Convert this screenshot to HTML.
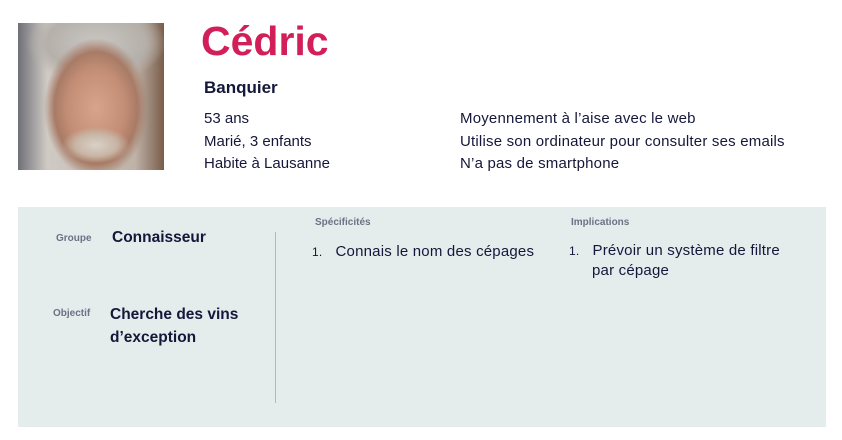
<!DOCTYPE html>
<html><head><meta charset="utf-8"><style>
body{margin:0;width:842px;height:440px;background:#fff;font-family:"Liberation Sans",sans-serif;color:#15173a;position:relative;overflow:hidden}
.a{position:absolute;white-space:nowrap}
.photo{position:absolute;left:18px;top:23px;width:146px;height:147px;background:
radial-gradient(ellipse 34px 18px at 78px 122px,#d9d1c8 0,#c8b6a6 60%,transparent 100%),
radial-gradient(ellipse 52px 70px at 78px 85px,#d6a58c 0,#c48e76 55%,#a87b66 80%,transparent 100%),
radial-gradient(ellipse 70px 40px at 78px 20px,#c9c6c2 0,#b5b0aa 70%,transparent 100%),
linear-gradient(90deg,#6f7078 0,#cfcac4 20%,#bfb3a8 80%,#7a5d4a 100%)}
.sm{font-size:15px;line-height:22.5px}
.lbl{font-size:10px;color:#6e7186;font-weight:bold}
.b{font-weight:bold;font-size:15.5px;line-height:23px}
</style></head><body>
<div class="photo"></div>
<div class="a" style="left:201px;top:18px;font-size:41px;font-weight:bold;color:#d21f5a">Cédric</div>
<div class="a" style="left:204px;top:78px;font-size:17px;font-weight:bold">Banquier</div>
<div class="a sm" style="left:204px;top:108px">53 ans<br>Marié, 3 enfants<br>Habite à Lausanne</div>
<div class="a sm" style="left:460px;top:108px;letter-spacing:0.2px">Moyennement à l’aise avec le web<br>Utilise son ordinateur pour consulter ses emails<br>N’a pas de smartphone</div>
<div style="position:absolute;left:18px;top:207px;width:808px;height:220px;background:#e5ecec"></div>
<div style="position:absolute;left:275px;top:232px;width:1px;height:171px;background:#b5b8b8"></div>
<div class="a lbl" style="left:56px;top:233px">Groupe</div>
<div class="a b" style="left:112px;top:226px">Connaisseur</div>
<div class="a lbl" style="left:53px;top:308px">Objectif</div>
<div class="a b" style="left:110px;top:303px">Cherche des vins<br>d’exception</div>
<div class="a lbl" style="left:315px;top:217px">Spécificités</div>
<div class="a lbl" style="left:571px;top:217px">Implications</div>
<div class="a sm" style="left:312px;top:241px;letter-spacing:0.2px"><span style="font-size:12px">1.</span>&nbsp;&nbsp;&nbsp;Connais le nom des cépages</div>
<div class="a sm" style="left:569px;top:241px;line-height:20px;letter-spacing:0.2px"><span style="font-size:12px">1.</span>&nbsp;&nbsp;&nbsp;Prévoir un système de filtre<br><span style="padding-left:23px">par cépage</span></div>
</body></html>
